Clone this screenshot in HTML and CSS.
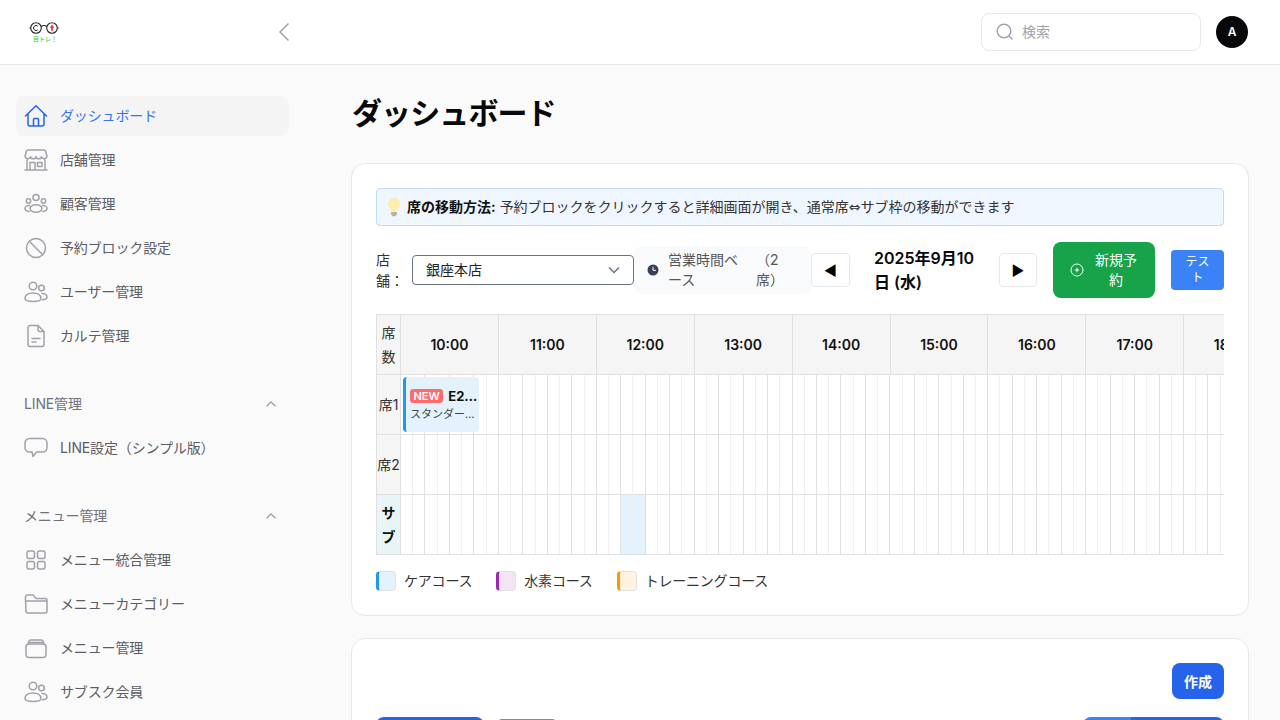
FILE: index.html
```html
<!DOCTYPE html>
<html lang="ja">
<head>
<meta charset="utf-8">
<title>ダッシュボード</title>
<link rel="stylesheet" href="styles.css">
</head>
<body>
<header class="topbar">
  <div class="topbar-left">
    <svg class="logo" width="30" height="24" viewBox="0 0 30 24">
      <g fill="none" stroke="#222" stroke-width="1.1">
        <circle cx="7" cy="8" r="5.300"/>
        <circle cx="23" cy="8" r="5.300"/>
        <path d="M12.300 6.500c2-1.500 3.400-1.500 5.400 0"/>
        <path d="M1.700 8H.3M28.300 8H29.700"/>
      </g>
      <path d="M8.800 6.200a2.500 2.500 0 1 0 0 3.600" fill="none" stroke="#222" stroke-width="1"/>
      <path d="M23 4.800l2.400 3h-1.500v3h-1.800v-3h-1.500z" fill="#f0343c"/>
      <text class="logo-text" x="4" y="21">目トレ！</text>
    </svg>
    <svg class="collapse" width="12" height="20" viewBox="0 0 12 20"><path d="M10.500 1.500L2 10l8.500 8.500" fill="none" stroke="#9ca3af" stroke-width="1.500"/></svg>
  </div>
  <div class="topbar-right">
    <label class="search">
      <svg width="20" height="20" viewBox="0 0 20 20"><circle cx="9" cy="9" r="6.800" fill="none" stroke="#9ca3af" stroke-width="1.400"/><path d="M14 14l3.500 3.500" stroke="#9ca3af" stroke-width="1.400" fill="none"/></svg>
      <span>検索</span>
    </label>
    <div class="avatar">A</div>
  </div>
</header>
<div class="shell">
  <nav class="sidebar">
    <a class="nav-item active"><svg class="ic" viewBox="0 0 24 24"><path d="M1.500 12L12 1.800 22.500 12M4 9.500V20a2 2 0 0 0 2 2h12a2 2 0 0 0 2-2V9.500M9.500 22v-6.500a1 1 0 0 1 1-1h3a1 1 0 0 1 1 1V22"/></svg><span>ダッシュボード</span></a>
    <a class="nav-item"><svg class="ic" viewBox="0 0 24 24"><path d="M4 2h16a1.500 1.500 0 0 1 1.500 1.300L23 8a2.800 2.800 0 0 1-5.500.6 2.800 2.800 0 0 1-5.500 0 2.800 2.800 0 0 1-5.500 0A2.800 2.800 0 0 1 1 8l1.500-4.700A1.500 1.500 0 0 1 4 2zM3 11.500V21.500M21 11.500V21.500M1 22h22M6 21.500V14.500h5V21.500M13.500 14.500H18V18.500H13.500z"/></svg><span>店舗管理</span></a>
    <a class="nav-item"><svg class="ic" viewBox="0 0 24 24"><circle cx="12" cy="5.500" r="3"/><circle cx="4.500" cy="9" r="2.200"/><circle cx="19.500" cy="9" r="2.200"/><ellipse cx="12" cy="16.500" rx="6" ry="3.800"/><path d="M5.500 13.500C3 13.500 1 15 1 16.500s1.700 2.800 4.200 2.900M18.500 13.500c2.500 0 4.500 1.500 4.500 3s-1.700 2.800-4.200 2.900"/></svg><span>顧客管理</span></a>
    <a class="nav-item"><svg class="ic" viewBox="0 0 24 24"><circle cx="12" cy="12" r="9.500"/><path d="M5.300 5.300l13.400 13.400"/></svg><span>予約ブロック設定</span></a>
    <a class="nav-item"><svg class="ic" viewBox="0 0 24 24"><circle cx="9" cy="6" r="3.800"/><circle cx="17.500" cy="8" r="2.800"/><path d="M1 18.500c0-3.500 3.500-5.500 8-5.500s8 2 8 5.500c0 2.200-3.500 3-8 3s-8-.8-8-3z"/><path d="M18 13.500c3 0 5 1.500 5 3.800 0 1.600-1.800 2.400-4.500 2.500"/></svg><span>ユーザー管理</span></a>
    <a class="nav-item"><svg class="ic" viewBox="0 0 24 24"><path d="M14 1.500H6a2 2 0 0 0-2 2v17a2 2 0 0 0 2 2h12a2 2 0 0 0 2-2V7.500zM14 1.500v4a2 2 0 0 0 2 2h4M8 14.500h8M8 18h4"/></svg><span>カルテ管理</span></a>

    <div class="nav-group">
      <span>LINE管理</span>
      <svg class="chev" width="12" height="8" viewBox="0 0 12 8"><path d="M1.500 6.200L6 2l4.500 4.200"/></svg>
    </div>
    <a class="nav-item"><svg class="ic" viewBox="0 0 24 24"><path d="M5.500 2.500h13A4.500 4.500 0 0 1 23 7v4.500a4.500 4.500 0 0 1-4.500 4.500H12.500l-3.500 4.500-1-4.500H5.500A4.500 4.500 0 0 1 1 11.500V7a4.500 4.500 0 0 1 4.500-4.500z"/></svg><span>LINE設定（シンプル版）</span></a>

    <div class="nav-group">
      <span>メニュー管理</span>
      <svg class="chev" width="12" height="8" viewBox="0 0 12 8"><path d="M1.500 6.200L6 2l4.500 4.200"/></svg>
    </div>
    <a class="nav-item"><svg class="ic" viewBox="0 0 24 24"><rect x="3" y="3" width="7.500" height="7.500" rx="2"/><rect x="13.500" y="3" width="7.500" height="7.500" rx="2"/><rect x="3" y="13.500" width="7.500" height="7.500" rx="2"/><rect x="13.500" y="13.500" width="7.500" height="7.500" rx="2"/></svg><span>メニュー統合管理</span></a>
    <a class="nav-item"><svg class="ic" viewBox="0 0 24 24"><path d="M1.500 8V5a2 2 0 0 1 2-2h5.500l3 3.500h9a2 2 0 0 1 2 2V19a2 2 0 0 1-2 2h-17a2 2 0 0 1-2-2zM1.500 9h21.500"/></svg><span>メニューカテゴリー</span></a>
    <a class="nav-item"><svg class="ic" viewBox="0 0 24 24"><rect x="2" y="8" width="20" height="13.500" rx="3"/><path d="M4.500 8V6a2.500 2.500 0 0 1 2.500-2h10a2.500 2.500 0 0 1 2.500 2v2M5.500 6.500h13"/></svg><span>メニュー管理</span></a>
    <a class="nav-item"><svg class="ic" viewBox="0 0 24 24"><circle cx="9" cy="6" r="3.800"/><circle cx="17.500" cy="8" r="2.800"/><path d="M1 18.500c0-3.500 3.500-5.500 8-5.500s8 2 8 5.500c0 2.200-3.500 3-8 3s-8-.8-8-3z"/><path d="M18 13.500c3 0 5 1.500 5 3.800 0 1.600-1.800 2.400-4.500 2.500"/></svg><span>サブスク会員</span></a>
  </nav>

  <main class="main">
    <h1 class="page-title">ダッシュボード</h1>

    <section class="card">
      <div class="notice">
        <svg class="bulb" width="16" height="20" viewBox="0 0 16 20"><path d="M8 .5a6.300 6.300 0 0 0-6.300 6.300c0 2.600 1.500 3.800 2.500 5.400.5.800.6 1.500.7 2.300h6.200c.1-.8.200-1.500.7-2.300 1-1.600 2.500-2.800 2.500-5.400A6.300 6.300 0 0 0 8 .5z" fill="#fdeeb0"/><path d="M5.200 15h5.600v2.200L9.300 19.300H6.700L5.200 17.200z" fill="#b5b0a8"/></svg>
        <p><strong>席の移動方法:</strong> 予約ブロックをクリックすると詳細画面が開き、通常席<span class="arrow">⇔</span>サブ枠の移動ができます</p>
      </div>

      <div class="controls">
        <span class="store-label">店舗：</span>
        <div class="select">
          <span>銀座本店</span>
          <svg width="12" height="8" viewBox="0 0 12 8"><path d="M1 1.500l5 5 5-5" fill="none" stroke="#6b7280" stroke-width="1.500"/></svg>
        </div>
        <div class="hours">
          <svg width="12" height="12" viewBox="0 0 12 12"><circle cx="6" cy="6" r="5.500" fill="#374151"/><path d="M6 2.800V6.300H9" fill="none" stroke="#fff" stroke-width="1"/></svg>
          <span class="hours-a">営業時間ベース</span>
          <span class="hours-b">（2席）</span>
        </div>
        <button class="nav-btn nav-prev">◀</button>
        <div class="date">2025年9月10日 (水)</div>
        <button class="nav-btn nav-next">▶</button>
        <button class="btn-new">
          <svg width="14" height="14" viewBox="0 0 14 14"><circle cx="7" cy="7" r="6" fill="none" stroke="#fff" stroke-width="1"/><path d="M7 4.800v4.400M4.800 7h4.400" stroke="#fff" stroke-width="1"/></svg>
          <span>新規予約</span>
        </button>
        <button class="btn-test">テスト</button>
      </div>

      <div class="timeline" id="timeline">
        <div class="tl-row tl-head">
          <div class="tl-seat">席数</div>
          <div class="tl-hour">10:00</div>
          <div class="tl-hour">11:00</div>
          <div class="tl-hour">12:00</div>
          <div class="tl-hour">13:00</div>
          <div class="tl-hour">14:00</div>
          <div class="tl-hour">15:00</div>
          <div class="tl-hour">16:00</div>
          <div class="tl-hour">17:00</div>
          <div class="tl-hour">18:00</div>
        </div>
        <div class="tl-row">
          <div class="tl-seat">席1</div>
          <div class="tl-slots" data-slots></div>
          <div class="booking">
            <div class="booking-top"><span class="badge">NEW</span><span class="booking-name">E2…</span></div>
            <div class="booking-sub">スタンダー…</div>
          </div>
        </div>
        <div class="tl-row">
          <div class="tl-seat">席2</div>
          <div class="tl-slots" data-slots></div>
        </div>
        <div class="tl-row">
          <div class="tl-seat tl-sub">サブ</div>
          <div class="tl-slots" data-slots data-hi="18,19"></div>
        </div>
      </div>

      <div class="legend">
        <div class="legend-item"><i class="sw sw-care"></i><span>ケアコース</span></div>
        <div class="legend-item"><i class="sw sw-h2"></i><span>水素コース</span></div>
        <div class="legend-item"><i class="sw sw-train"></i><span>トレーニングコース</span></div>
      </div>
    </section>

    <section class="card card-second">
      <div class="second-top"><button class="btn-create">作成</button></div>
      <div class="second-tabs">
        <div class="tabs-left"><span class="tab-a"></span><span class="tab-b"></span></div>
        <div class="seg"><span class="seg-a"></span><span class="seg-b"></span></div>
      </div>
    </section>
  </main>
</div>
<script src="script.js"></script>
</body>
</html>
```

FILE: styles.css
```css
* { box-sizing: border-box; }
html, body { margin: 0; height: 720px; overflow: hidden; }
body {
  background: #fafafa;
  color: #111827;
  font-family: Inter, "Noto Sans CJK JP", sans-serif;
  font-size: 14px;
  line-height: 20px;
}
button { font-family: inherit; cursor: pointer; }
p, h1 { margin: 0; }

.topbar {
  height: 65px;
  background: #fff;
  border-bottom: 1px solid #e5e7eb;
  display: flex;
  justify-content: space-between;
  align-items: center;
  padding: 0 32px 0 29px;
}
.topbar-left { display: flex; align-items: center; width: 261px; justify-content: space-between; }
.logo { display: block; }
.logo-text { font-size: 6px; fill: #5fdc5f; font-family: "Noto Sans CJK JP", sans-serif; font-weight: 700; }
.collapse { display: block; }
.topbar-right { display: flex; align-items: center; gap: 15px; }
.search {
  width: 220px;
  height: 38px;
  border: 1px solid #e5e7eb;
  border-radius: 8px;
  background: #fff;
  display: flex;
  align-items: center;
  gap: 7px;
  padding: 0 13px;
  color: #a1a1aa;
}
.search svg { display: block; }
.avatar {
  width: 32px;
  height: 32px;
  border-radius: 50%;
  background: #09090b;
  color: #fff;
  font-size: 12px;
  font-weight: 600;
  display: flex;
  align-items: center;
  justify-content: center;
}

.shell { display: flex; height: 655px; overflow: hidden; }
.sidebar {
  width: 305px;
  flex: none;
  padding: 31px 16px 0;
  display: flex;
  flex-direction: column;
  gap: 4px;
}
.nav-item {
  display: flex;
  align-items: center;
  gap: 12px;
  height: 40px;
  padding: 0 8px;
  border-radius: 8px;
  color: #5c5c64;
  letter-spacing: -0.14px;
  flex: none;
}
.nav-item.active { background: #f4f4f5; color: #3574ec; }
.ic {
  width: 24px;
  height: 24px;
  flex: none;
  fill: none;
  stroke: #a1a1aa;
  stroke-width: 1.500;
  stroke-linejoin: round;
  stroke-linecap: round;
}
.active .ic { stroke: #2563eb; }
.nav-group {
  display: flex;
  justify-content: space-between;
  align-items: center;
  height: 40px;
  flex: none;
  margin-top: 24px;
  padding: 0 12px 0 8px;
  color: #71717a;
  letter-spacing: -0.14px;
}
.chev { fill: none; stroke: #a1a1aa; stroke-width: 1.300; }

.main { flex: 1; min-width: 0; padding: 30px 31px 0 46px; }
.page-title { font-size: 30px; line-height: 36px; font-weight: 700; letter-spacing: -0.9px; color: #09090b; margin-bottom: 32px; padding-left: 1px; }
.card {
  background: #fff;
  border: 1px solid #e5e7eb;
  border-radius: 14px;
  padding: 24px;
}
.notice {
  display: flex;
  align-items: center;
  gap: 5px;
  height: 38px;
  background: #eff6ff;
  border: 1px solid #bfdbfe;
  border-radius: 4px;
  padding: 0 9px;
  font-size: 14px;
  color: #333;
}
.notice strong { color: #111; }
.arrow { font-family: "DejaVu Sans", sans-serif; }
.bulb { flex: none; }

.controls {
  display: flex;
  align-items: center;
  margin-top: 16px;
  height: 56px;
}
.store-label { width: 36px; line-height: 21px; flex: none; color: #333; }
.select {
  width: 222px;
  height: 30px;
  flex: none;
  border: 1px solid #6b7280;
  border-radius: 4px;
  background: #fff;
  display: flex;
  align-items: center;
  justify-content: space-between;
  padding: 0 13px;
  color: #222;
}
.hours {
  width: 177px;
  height: 48px;
  flex: none;
  display: flex;
  align-items: center;
  background: #f9fafb;
  border-radius: 8px;
  padding: 0 12px 0 13px;
  font-size: 14px;
  line-height: 20px;
  color: #555;
}
.hours svg { flex: none; margin-right: 9px; }
.hours-a { width: 75px; flex: none; }
.hours-b { width: 36px; flex: none; margin-left: 13px; }
.nav-btn {
  height: 34px;
  background: #fff;
  border: 1px solid #e5e7eb;
  border-radius: 4px;
  padding: 0;
  font-size: 14px;
  color: #000;
  flex: none;
}
.nav-prev { width: 39px; }
.nav-next { width: 38px; }
.date {
  width: 149px;
  padding: 0 24px 0 24px;
  font-size: 16px;
  line-height: 24px;
  font-weight: 600;
  color: #09090b;
  flex: none;
}
.btn-new {
  margin-left: 16px;
  width: 102px;
  height: 56px;
  flex: none;
  background: #16a34a;
  border: 0;
  border-radius: 8px;
  color: #fff;
  font-size: 14px;
  line-height: 20px;
  display: flex;
  align-items: center;
  gap: 10px;
  padding: 0 17px;
}
.btn-new svg { flex: none; }
.btn-new span { width: 44px; text-align: center; flex: none; }
.btn-test {
  margin-left: 16px;
  width: 53px;
  height: 40px;
  flex: none;
  background: #3b82f6;
  border: 0;
  border-radius: 4px;
  color: #fff;
  font-size: 12px;
  line-height: 16px;
  padding: 0 12px;
}

.timeline {
  margin-top: 16px;
  overflow: hidden;
  border-top: 1px solid #e0e0e0;
  border-left: 1px solid #e0e0e0;
}
.tl-row {
  position: relative;
  display: flex;
  height: 60px;
  width: max-content;
  border-bottom: 1px solid #e0e0e0;
}
.tl-seat {
  width: 24px;
  flex: none;
  background: #f5f5f5;
  border-right: 1px solid #e0e0e0;
  display: flex;
  align-items: center;
  justify-content: center;
  text-align: center;
  line-height: 24px;
  color: #333;
}
.tl-sub { background: #e8f4f8; font-weight: 700; color: #111; }
.tl-head { background: #f5f5f5; }
.tl-hour {
  width: 97.920px;
  flex: none;
  background: #f5f5f5;
  border-right: 1px solid #e0e0e0;
  display: flex;
  align-items: center;
  justify-content: center;
  font-weight: 600;
  font-size: 14px;
  color: #111;
}
.tl-slots { display: flex; }
.slot { width: 12.240px; flex: none; background: #fff; border-right: 1px solid #e0e0e0; }
.slot.odd { border-right-color: #f0f0f0; }
.slot.hi { background: #e3f2fd; }
.booking {
  position: absolute;
  left: 26px;
  top: 2px;
  width: 76px;
  height: 55px;
  background: #e3f2fd;
  border-left: 3px solid #2196f3;
  border-radius: 4px;
  padding: 10px 4px 0 4px;
  overflow: hidden;
}
.booking-top { display: flex; align-items: center; gap: 5px; height: 18px; }
.badge {
  background: #ff6b6b;
  color: #fff;
  font-size: 11px;
  font-weight: 600;
  line-height: 14px;
  padding: 0 3.500px;
  border-radius: 3px;
  flex: none;
}
.booking-name { font-size: 13px; font-weight: 700; color: #111; white-space: nowrap; }
.booking-sub { font-size: 11px; line-height: 16px; margin-top: 1px; color: #444; white-space: nowrap; }

.legend { display: flex; gap: 24px; margin-top: 16px; height: 20px; }
.legend-item { display: flex; align-items: center; gap: 8px; color: #333; letter-spacing: -0.2px; }
.sw { display: block; width: 20px; height: 20px; border: 1px solid #e0e0e0; border-radius: 4px; border-left-width: 3px; }
.sw-care { background: #e3f2fd; border-left-color: #2196f3; }
.sw-h2 { background: #f3e5f5; border-left-color: #9c27b0; }
.sw-train { background: #fff3e0; border-left-color: #ff9800; }

.card-second { margin-top: 22px; height: 200px; }
.second-top { display: flex; justify-content: flex-end; }
.btn-create {
  width: 52px;
  height: 36px;
  background: #2563eb;
  color: #fff;
  border: 0;
  border-radius: 8px;
  font-size: 14px;
  font-weight: 600;
  padding: 0;
}
.second-tabs { display: flex; justify-content: space-between; margin-top: 18px; }
.tabs-left { display: flex; gap: 14px; align-items: flex-start; }
.tab-a { display: block; width: 108px; height: 36px; border-radius: 8px; background: #2563eb; }
.tab-b { display: block; width: 58px; height: 34px; margin-top: 2px; border-radius: 4px; background: #5b8def; }
.seg { display: flex; width: 141px; height: 36px; border-radius: 8px; overflow: hidden; }
.seg-a { display: block; width: 48px; background: #3b82f6; }
.seg-b { display: block; flex: 1; background: #2563eb; }
```

FILE: script.js
```js
document.querySelectorAll('[data-slots]').forEach(function (row) {
  var hi = (row.dataset.hi || '').split(',');
  for (var i = 0; i < 72; i++) {
    var c = document.createElement('div');
    c.className = 'slot' + (i % 2 === 0 ? ' odd' : '') + (hi.indexOf(String(i)) >= 0 ? ' hi' : '');
    row.appendChild(c);
  }
});
```
